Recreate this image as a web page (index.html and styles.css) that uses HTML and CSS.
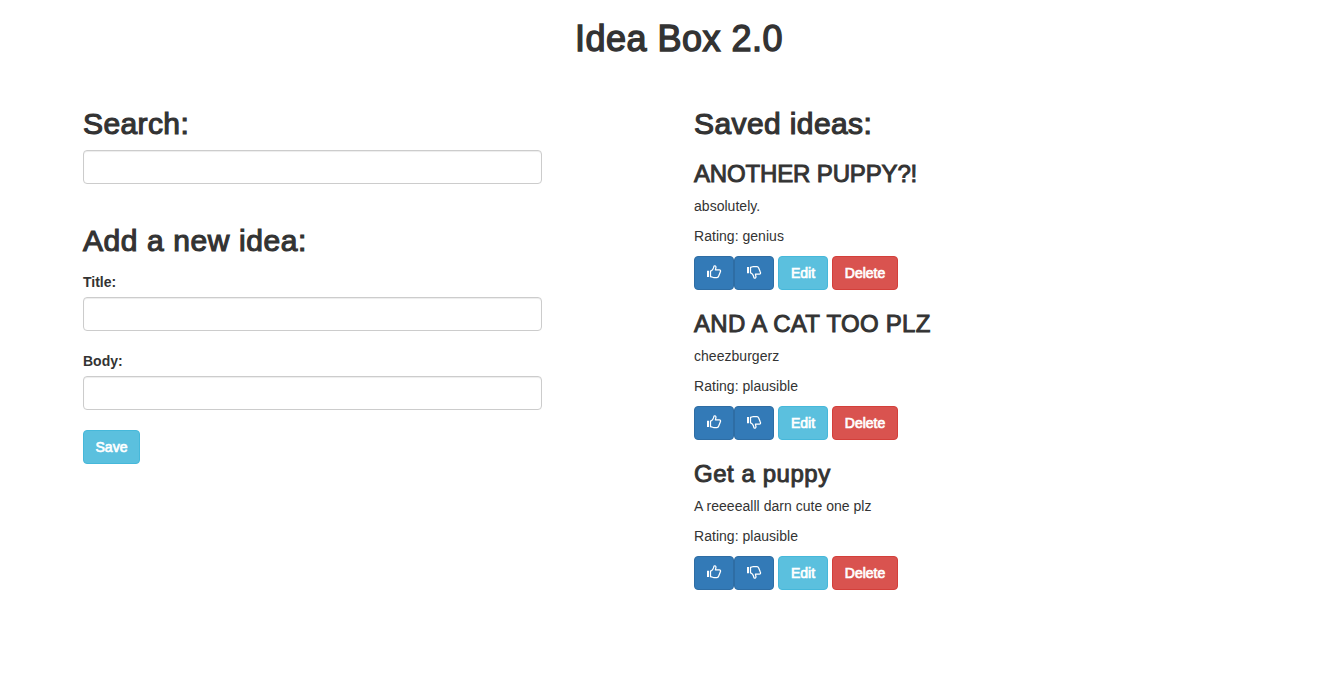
FILE: index.html
```html
<!DOCTYPE html>
<html lang="en">
<head>
<meta charset="utf-8">
<title>Idea Box 2.0</title>
<link rel="stylesheet" href="styles.css">
</head>
<body>
<svg class="sprite" aria-hidden="true">
  <symbol id="thumb" viewBox="0 0 16 16">
    <path class="cuff" d="M1 6.8h2v6.2H1z"/>
    <path class="hand" d="M4.5 7.2C6.2 6.6 7.6 4.300 8 2q1.900-.6 2 1.200l-.6 2.700h3.900c1.200 0 1.600 1 1 2l-1.700 4.400q-.4 1.200-1.600 1.200H7.500L4.500 12.700z"/>
  </symbol>
</svg>
<div class="container">
  <h1>Idea Box 2.0</h1>
  <main class="columns">
    <section class="forms">
      <h2 class="search-heading">Search:</h2>
      <input class="field" type="text" aria-label="Search">
      <form class="new-idea">
        <h2 class="new-heading">Add a new idea:</h2>
        <label for="title">Title:</label>
        <input class="field" id="title" type="text">
        <label for="body">Body:</label>
        <input class="field" id="body" type="text">
        <button class="btn info save" type="button">Save</button>
      </form>
    </section>
    <section class="ideas">
      <h2 class="saved-heading">Saved ideas:</h2>
      <article>
        <h3 class="another">ANOTHER PUPPY?!</h3>
        <p>absolutely.</p>
        <p>Rating: genius</p>
        <div class="actions">
          <div class="votes">
            <button class="btn primary" type="button" aria-label="Thumbs up"><svg class="icon"><use href="#thumb"/></svg></button>
            <button class="btn primary" type="button" aria-label="Thumbs down"><svg class="icon down"><use href="#thumb"/></svg></button>
          </div>
          <button class="btn info edit" type="button">Edit</button>
          <button class="btn danger delete" type="button">Delete</button>
        </div>
      </article>
      <article>
        <h3 class="cat">AND A CAT TOO PLZ</h3>
        <p>cheezburgerz</p>
        <p>Rating: plausible</p>
        <div class="actions">
          <div class="votes">
            <button class="btn primary" type="button" aria-label="Thumbs up"><svg class="icon"><use href="#thumb"/></svg></button>
            <button class="btn primary" type="button" aria-label="Thumbs down"><svg class="icon down"><use href="#thumb"/></svg></button>
          </div>
          <button class="btn info edit" type="button">Edit</button>
          <button class="btn danger delete" type="button">Delete</button>
        </div>
      </article>
      <article>
        <h3 class="puppy">Get a puppy</h3>
        <p>A reeeealll darn cute one plz</p>
        <p>Rating: plausible</p>
        <div class="actions">
          <div class="votes">
            <button class="btn primary" type="button" aria-label="Thumbs up"><svg class="icon"><use href="#thumb"/></svg></button>
            <button class="btn primary" type="button" aria-label="Thumbs down"><svg class="icon down"><use href="#thumb"/></svg></button>
          </div>
          <button class="btn info edit" type="button">Edit</button>
          <button class="btn danger delete" type="button">Delete</button>
        </div>
      </article>
    </section>
  </main>
</div>
</body>
</html>
```
FILE: styles.css
```css
* { box-sizing: border-box; }
body {
  margin: 0;
  background: #fff;
  color: #333;
  font: 14px/20px "Helvetica Neue", Helvetica, "Liberation Sans", Arial, sans-serif;
}
.sprite { position: absolute; width: 0; height: 0; }
.container { width: 1192px; margin-left: 83px; padding-bottom: 40px; }
h1, h2, h3 {
  margin: 0;
  font-weight: 400;
  -webkit-text-stroke: 1.15px #333;
}
h1 {
  padding-top: 19px;
  font-size: 36px;
  line-height: 39px;
  text-align: center;
  letter-spacing: 0.5px;
  -webkit-text-stroke-width: 1.4px;
}
h2 { font-size: 30px; line-height: 33px; letter-spacing: 0.4px; }
h3 { margin: 21px 0 9px; font-size: 24px; line-height: 26px; -webkit-text-stroke-width: 0.95px; }
.new-heading { letter-spacing: 0.58px; }
.another { letter-spacing: -0.15px; }
.cat { letter-spacing: 0.3px; }
.puppy { letter-spacing: 0.55px; }
p { margin: 0 0 10px; letter-spacing: 0.03px; }
.columns {
  display: grid;
  grid-template-columns: 459px 1fr;
  column-gap: 152px;
  margin-top: 49px;
}
.field {
  display: block;
  width: 100%;
  height: 34px;
  padding: 6px 12px;
  border: 1px solid #ccc;
  border-radius: 4px;
  background: #fff;
  box-shadow: inset 0 1px 1px rgba(0, 0, 0, 0.075);
  font: inherit;
}
.search-heading { margin-bottom: 10px; }
.new-idea { margin-top: 40px; }
.new-heading { margin-bottom: 15px; }
label { display: block; margin-bottom: 5px; font-weight: 700; }
.new-idea .field { margin-bottom: 20px; }
.btn {
  display: block;
  height: 34px;
  padding: 0;
  border: 1px solid;
  border-radius: 4px;
  color: #fff;
  font: inherit;
  -webkit-text-stroke: 0.7px #fff;
}
.primary { width: 40px; background: #337ab7; border-color: #2e6da4; }
.info { background: #5bc0de; border-color: #46b8da; }
.danger { background: #d9534f; border-color: #d43f3a; }
.save { width: 57px; }
.edit { width: 50px; }
.delete { width: 66px; }
.actions { display: flex; gap: 4px; }
.votes { display: flex; }
.icon {
  display: block;
  width: 16px;
  height: 16px;
  margin: -2px auto 0;
}
.down { transform: scaleY(-1); }
.cuff { fill: #fff; stroke: none; }
.hand { fill: none; stroke: #fff; stroke-width: 1.25; stroke-linejoin: round; }
```
